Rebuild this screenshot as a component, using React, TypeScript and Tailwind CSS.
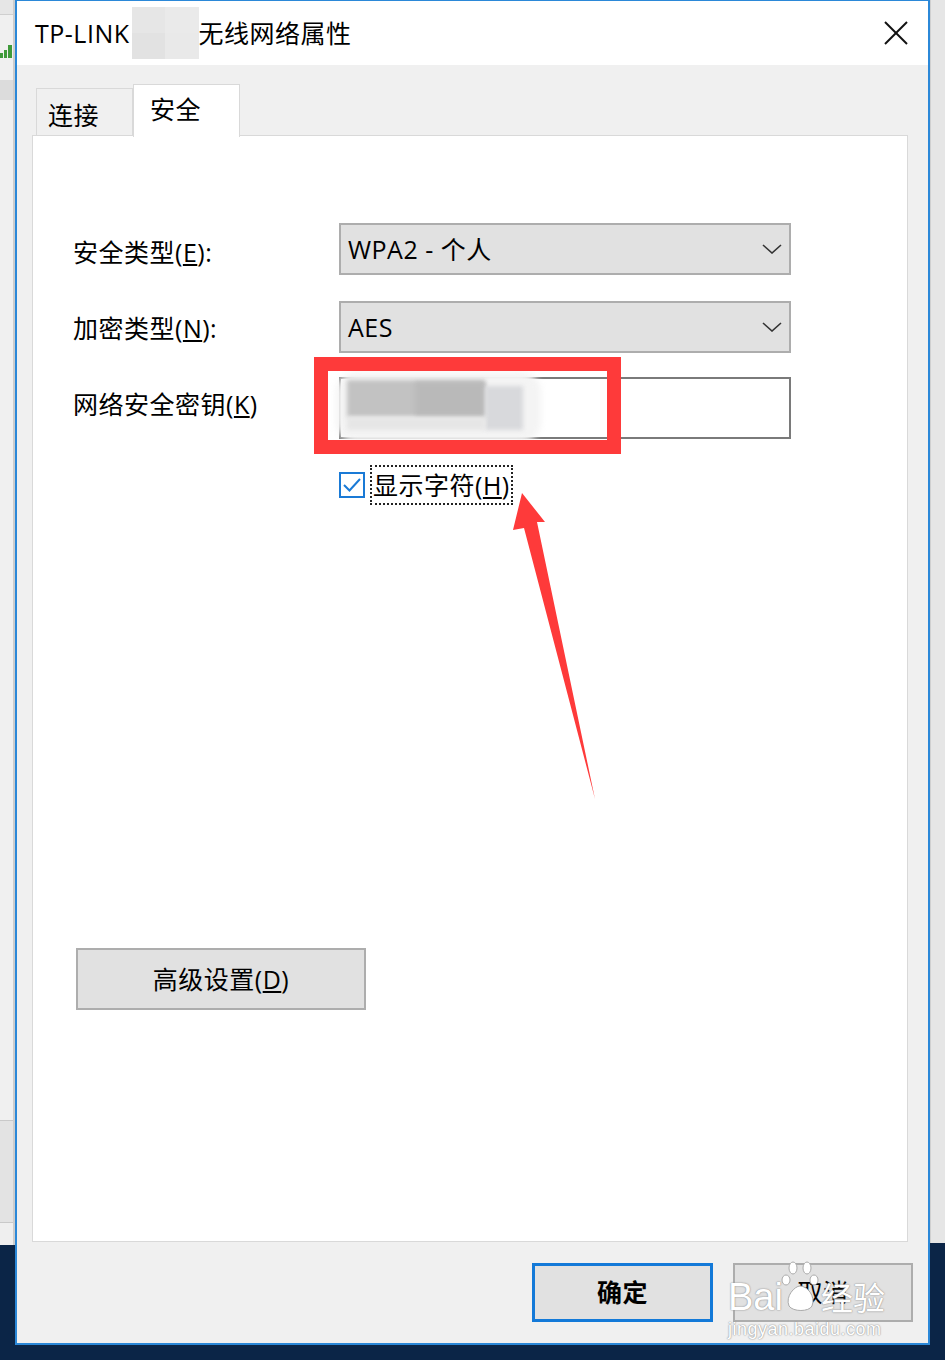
import React from "react";

const FONT = "font-['Open_Sans','Noto_Sans_CJK_SC',sans-serif]";
const TXT = "text-[25px] leading-none text-black tracking-[0.5px]";

function Chevron() {
  return (
    <svg width="20" height="10" viewBox="0 0 20 10" className="shrink-0">
      <polyline points="1,1 10,9 19,1" fill="none" stroke="#333" strokeWidth="1.6" />
    </svg>
  );
}

function Select({ children }: { children: React.ReactNode }) {
  return (
    <div className="flex items-center justify-between w-[452px] h-[52px] bg-[#e1e1e1] border-2 border-[#adadad] pl-[7px] pr-[7px]">
      <span className={TXT}>{children}</span>
      <Chevron />
    </div>
  );
}

export default function App() {
  return (
    <div className={`relative w-[945px] h-[1360px] overflow-hidden bg-[#0b2547] ${FONT}`}>
      <div className="flex h-[1345px]">
        {/* left background strip */}
        <div className="w-[15px] h-[1245px] flex flex-col bg-[#f0f0f0] border-r-2 border-[#cdcdcd]">
          <div className="h-[15px] bg-[#e6e6e6] border-b border-[#cfcfcf]" />
          <div className="h-[65px] flex items-start pt-[26px]">
            <svg width="13" height="17" viewBox="0 0 13 17">
              <rect x="0" y="12" width="3" height="5" fill="#3f9a3a" />
              <rect x="4" y="9" width="3" height="8" fill="#3f9a3a" />
              <rect x="8" y="4" width="4" height="13" fill="#3f9a3a" />
            </svg>
          </div>
          <div className="h-[20px] bg-[#dcdcdc]" />
          <div className="h-[1020px]" />
          <div className="h-[103px] bg-[#e3e3e3] border-y border-[#c9c9c9]" />
          <div className="flex-1 bg-[#efefef]" />
        </div>

        {/* window */}
        <div className="w-[915px] h-[1345px] flex flex-col border-2 border-t border-[#2b88d8] bg-[#f0f0f0]">
          {/* title bar */}
          <div className="h-[64px] bg-white flex items-center pl-[18px] pr-[20px]">
            <span className={TXT}>TP-LINK</span>
            <div className="w-[67px] h-[52px] ml-[2px] grid grid-cols-2 grid-rows-2">
              <div className="bg-[#e6e6e6]" />
              <div className="bg-[#eaeaea]" />
              <div className="bg-[#e2e2e2]" />
              <div className="bg-[#e9e9e9]" />
            </div>
            <span className={TXT}>无线网络属性</span>
            <div className="flex-1" />
            <svg width="24" height="24" viewBox="0 0 24 24">
              <line x1="1" y1="1" x2="23" y2="23" stroke="#111" strokeWidth="2" />
              <line x1="23" y1="1" x2="1" y2="23" stroke="#111" strokeWidth="2" />
            </svg>
          </div>

          {/* body */}
          <div className="flex-1 flex flex-col pt-[19px] pl-[15px] pr-[20px]">
            {/* tabs */}
            <div className="flex items-end h-[51px] ml-[4px]">
              <div className="w-[97px] h-[47px] border border-b-0 border-[#d9d9d9] bg-[#f0f0f0] flex items-center pl-[11px] pt-[6px]">
                <span className={TXT}>连接</span>
              </div>
              <div className="relative z-10 -mb-[2px] w-[107px] h-[53px] border border-b-0 border-[#d9d9d9] bg-white flex items-center pl-[16px] pb-[4px]">
                <span className={TXT}>安全</span>
              </div>
            </div>

            {/* panel */}
            <div className="h-[1107px] bg-white border border-[#d9d9d9] flex flex-col pt-[87px] pl-[40px]">
              <div className="flex items-center">
                <div className={`w-[266px] pt-[6px] ${TXT}`}>
                  安全类型(<span className="underline underline-offset-2">E</span>):
                </div>
                <Select>WPA2 - 个人</Select>
              </div>
              <div className="flex items-center mt-[26px]">
                <div className={`w-[266px] pt-[2px] ${TXT}`}>
                  加密类型(<span className="underline underline-offset-2">N</span>):
                </div>
                <Select>AES</Select>
              </div>
              <div className="flex items-center mt-[24px]">
                <div className={`w-[266px] pb-[8px] ${TXT}`}>
                  网络安全密钥(<span className="underline underline-offset-2">K</span>)
                </div>
                <div className="w-[452px] h-[62px] bg-white border-2 border-[#7a7a7a]" />
              </div>
              <div className="flex items-center mt-[26px] ml-[266px]">
                <div className="w-[26px] h-[26px] border-2 border-[#1a7ad6] bg-white flex items-center justify-center">
                  <svg width="20" height="16" viewBox="0 0 20 16">
                    <polyline points="2,8 7.5,13.5 18,2" fill="none" stroke="#1a7ad6" strokeWidth="2" />
                  </svg>
                </div>
                <div className="ml-[5px] h-[40px] px-[1px] border-2 border-dotted border-[#222] flex items-center">
                  <span className={TXT}>
                    显示字符(<span className="underline underline-offset-2">H</span>)
                  </span>
                </div>
              </div>
              <div className="mt-[443px] ml-[3px] w-[290px] h-[62px] bg-[#e1e1e1] border-2 border-[#adadad] flex items-center justify-center">
                <span className={TXT}>
                  高级设置(<span className="underline underline-offset-2">D</span>)
                </span>
              </div>
            </div>

            {/* buttons */}
            <div className="flex justify-end gap-[20px] mt-[21px] -mr-[5px]">
              <div className="w-[181px] h-[59px] bg-[#e1e1e1] border-[3px] border-[#1379d8] flex items-center justify-center">
                <span className={`${TXT} font-semibold`}>确定</span>
              </div>
              <div className="w-[180px] h-[59px] bg-[#e1e1e1] border-2 border-[#adadad] flex items-center justify-center">
                <span className={TXT}>取消</span>
              </div>
            </div>
          </div>
        </div>

        {/* right background strip */}
        <div className="w-[15px] h-[1243px] bg-[#e6e6e6] border-l border-[#d0d0d0]" />
      </div>

      {/* blurred key content */}
      <div className="absolute left-[336px] top-[372px] w-[205px] h-[70px] bg-[#f4f4f4] blur-[3px] rounded-[20px]" />
      <div className="absolute left-[347px] top-[380px] w-[138px] h-[37px] bg-[#c2c2c2] blur-[2px]" />
      <div className="absolute left-[415px] top-[382px] w-[70px] h-[34px] bg-[#b9b9b9] blur-[2px]" />
      <div className="absolute left-[485px] top-[386px] w-[38px] h-[44px] bg-[#d8d9dc] blur-[2px]" />
      <div className="absolute left-[347px] top-[417px] w-[138px] h-[13px] bg-[#e6e6e6] blur-[2px]" />

      {/* red annotation box */}
      <div className="absolute left-[314px] top-[357px] w-[307px] h-[97px] border-[14px] border-[#fe3a3a]" />

      {/* red arrow */}
      <svg className="absolute left-0 top-0" width="945" height="1360" viewBox="0 0 945 1360">
        <polygon points="522,493 545,522 537,522 595,799 524,528 513,530" fill="#fe3a3a" />
      </svg>

      {/* baidu watermark */}
      <div className="absolute left-[728px] top-[1256px] flex flex-col text-white [text-shadow:0_0_2px_#9a9a9a,0_0_1px_#8a8a8a]">
        <div className="flex items-end h-[58px]">
          <span className="text-[38px] leading-none font-['Liberation_Sans',sans-serif] mb-[-2px]">Bai</span>
          <svg width="40" height="54" viewBox="0 0 40 54" className="mx-[-2px]">
            <g fill="white" stroke="#aaa" strokeWidth="1">
              <ellipse cx="12" cy="8" rx="4" ry="6" />
              <ellipse cx="26" cy="8" rx="4" ry="6" />
              <ellipse cx="5" cy="20" rx="4" ry="5" />
              <ellipse cx="33" cy="20" rx="4" ry="5" />
              <path d="M8 46 C4 36 14 26 19 26 C26 26 35 36 31 46 C28 52 12 52 8 46 Z" />
            </g>
          </svg>
          <span className="text-[32px] leading-none font-['Noto_Sans_CJK_SC',sans-serif] ml-[2px] mb-[2px]">经验</span>
        </div>
        <span className="text-[18px] leading-none font-['Liberation_Sans',sans-serif] mt-[6px] tracking-[0.5px]">jingyan.baidu.com</span>
      </div>
    </div>
  );
}
